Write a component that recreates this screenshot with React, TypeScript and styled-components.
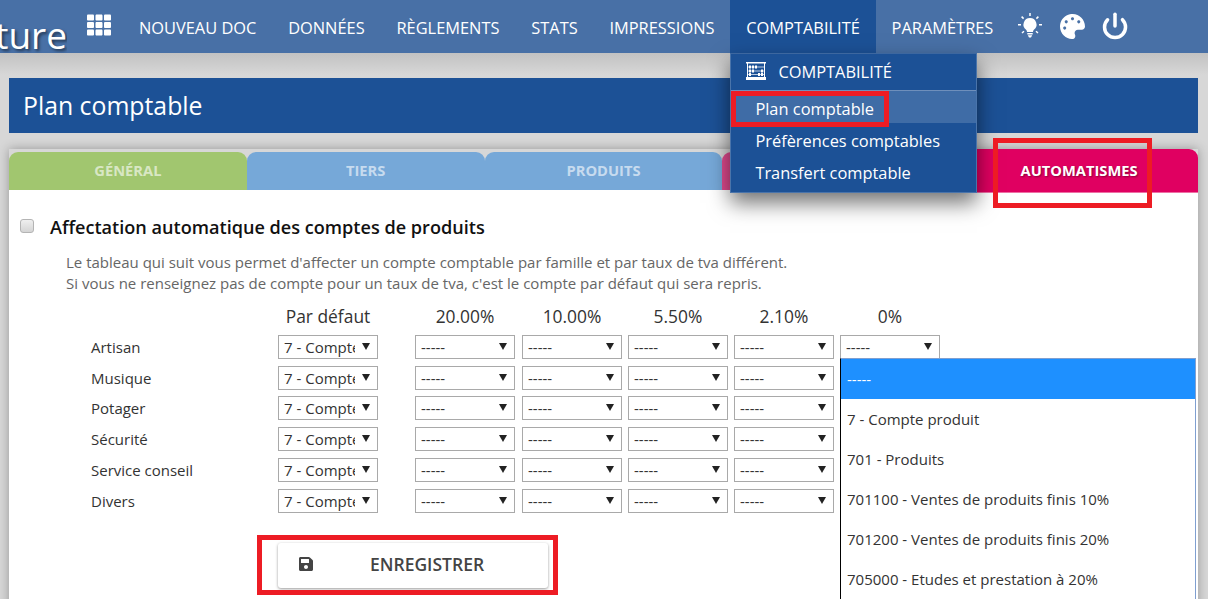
import * as React from "react";
import styled, { createGlobalStyle } from "styled-components";
import { FaPalette, FaSave, FaTh } from "react-icons/fa";
import { Power } from "lucide-react";

const GlobalStyle = createGlobalStyle`
  html, body {
    margin: 0;
    height: 599px;
    overflow: hidden;
    background: #d7d7d7;
    font-family: "Open Sans", "Liberation Sans", sans-serif;
  }
`;

const Page = styled.div`
  position: relative;
  width: 1208px;
  height: 599px;
  overflow: hidden;
`;

const NavBar = styled.nav`
  display: flex;
  align-items: stretch;
  height: 53px;
  background: #4870a6;
  color: #fff;
  position: relative;
  z-index: 3;
`;

const Logo = styled.div`
  width: 67px;
  height: 53px;
  overflow: hidden;
  direction: rtl;
  font-size: 37px;
  line-height: 70px;
  white-space: nowrap;
  text-shadow: 2px 2px 3px rgba(0, 0, 0, 0.5);
`;

const GridButton = styled.div`
  width: 24px;
  margin: 0 12px 0 20px;
  padding-top: 13px;
  font-size: 24px;
  line-height: 0;
`;

const NavItem = styled.div<{ $active?: boolean }>`
  position: relative;
  display: flex;
  align-items: center;
  padding: 1px 15.9px 0;
  font-size: 16.4px;
  background: ${(p) => (p.$active ? "#1c5196" : "transparent")};
`;

const NavIcons = styled.div`
  display: flex;
  align-items: center;
  gap: 17px;
  margin-left: 8px;
  padding-bottom: 1px;
`;

const PowerIcon = styled(Power)`
  margin: -1px;
`;

const Menu = styled.div`
  position: absolute;
  top: 53px;
  left: 0;
  width: 245px;
  padding-bottom: 5px;
  background: #1c5196;
  border: 1px solid #4a74aa;
  border-top-color: #3d679f;
  box-shadow: 0 10px 20px rgba(0, 0, 0, 0.55);
`;

const MenuHeader = styled.div`
  display: flex;
  align-items: center;
  gap: 12px;
  height: 34px;
  padding: 0 0 2px 15px;
  border-bottom: 1px solid #6f8fbb;
`;

const MenuItem = styled.div<{ $active?: boolean }>`
  height: 32px;
  line-height: 36px;
  padding-left: 24px;
  background: ${(p) => (p.$active ? "#3f6ca6" : "transparent")};
`;

const Main = styled.main`
  padding: 25px 10px 0 9px;
  height: 546px;
  box-sizing: border-box;
  background: linear-gradient(#c2c2c2, #d7d7d7 22px);
`;

const TitleBar = styled.h1`
  margin: 0;
  height: 55px;
  line-height: 55px;
  padding-left: 14px;
  background: #1c5196;
  color: #fff;
  font-size: 24.8px;
  font-weight: 400;
`;

const Card = styled.section`
  margin-top: 16px;
  box-shadow: 0 0 10px rgba(0, 0, 0, 0.3);
`;

const TabRow = styled.div`
  display: flex;
  align-items: flex-end;
  height: 41px;
  background: #d7d7d7;
`;

const Tab = styled.div<{ $color: string; $active?: boolean }>`
  position: relative;
  z-index: ${(p) => (p.$active ? 1 : 0)};
  flex: 1;
  height: ${(p) => (p.$active ? "44px" : "38px")};
  margin-bottom: ${(p) => (p.$active ? "-3px" : "0")};
  box-sizing: border-box;
  padding-top: ${(p) => (p.$active ? "12px" : "9px")};
  border-radius: 9px 9px 0 0;
  border-bottom: ${(p) => (p.$active ? "1px solid #ee6fa4" : "none")};
  background: ${(p) => p.$color};
  color: ${(p) => (p.$active ? "#fff" : "rgba(255, 255, 255, 0.6)")};
  font-size: 14.7px;
  font-weight: 700;
  line-height: 19px;
  text-align: center;
  text-shadow: ${(p) => (p.$active ? "1px 1px 2px rgba(0, 0, 0, 0.4)" : "none")};
`;

const Panel = styled.div`
  height: 420px;
  background: #fff;
  padding-top: 25px;
`;

const Heading = styled.div`
  display: flex;
  align-items: center;
  height: 24px;
  padding-left: 11px;
  gap: 16px;
  color: #111;
  font-size: 18.1px;
  font-weight: 600;
`;

const Check = styled.span`
  width: 14px;
  height: 14px;
  margin-top: -3px;
  box-sizing: border-box;
  border: 1px solid #b4b4b4;
  border-radius: 3px;
  background: linear-gradient(#efefef, #d4d4d4);
`;

const Description = styled.p`
  margin: 13px 0 0 57px;
  color: #666;
  font-size: 15px;
  line-height: 20.5px;
`;

const AccountGrid = styled.div`
  display: grid;
  grid-template-columns: 187px 137px 107px 106px 106px 106px 100px;
  grid-auto-rows: 24px;
  row-gap: 6.8px;
  margin: 11px 0 0 82px;
  font-size: 15px;
  color: #333;
  align-items: center;
`;

const ColumnHead = styled.div`
  width: 100px;
  color: #333;
  font-size: 17.4px;
  text-align: center;
`;

const SelectBox = styled.div`
  position: relative;
  display: flex;
  align-items: center;
  width: 100px;
  height: 24px;
  box-sizing: border-box;
  padding: 0 0 0 5px;
  border: 1px solid #a9a9a9;
  background: #fff;
  color: #333;
`;

const SelectValue = styled.span`
  width: 71px;
  overflow: hidden;
  white-space: nowrap;
`;

const Arrow = styled.span`
  position: absolute;
  right: 7px;
  top: 7px;
  border-left: 4px solid transparent;
  border-right: 4px solid transparent;
  border-top: 7px solid #222;
`;

const OpenList = styled.ul`
  position: absolute;
  top: 22px;
  left: -1px;
  z-index: 2;
  width: 356px;
  margin: 0;
  padding: 0;
  box-sizing: border-box;
  list-style: none;
  background: #fff;
  border: 1px solid #7f9fd0;
  border-left-color: #000;
  font-size: 15px;
`;

const OpenOption = styled.li<{ $selected?: boolean }>`
  height: 40px;
  line-height: 40px;
  padding-left: 6px;
  white-space: nowrap;
  background: ${(p) => (p.$selected ? "#1e90ff" : "#fff")};
  color: ${(p) => (p.$selected ? "#fff" : "#333")};
`;

const SaveButton = styled.button`
  display: flex;
  align-items: center;
  width: 270px;
  height: 45px;
  margin: 30px 0 0 269px;
  padding: 0 0 2px 20px;
  border: none;
  border-radius: 3px;
  background: #fff;
  color: #444;
  font-family: inherit;
  font-size: 17.5px;
  font-weight: 600;
  box-shadow: 0 1px 3px rgba(0, 0, 0, 0.4);
`;

const SaveLabel = styled.span`
  margin-left: 56px;
`;

// red marks added over the screenshot
const Mark = styled.div<{ $x: number; $y: number; $w: number; $h: number }>`
  position: absolute;
  z-index: 5;
  left: ${(p) => p.$x}px;
  top: ${(p) => p.$y}px;
  width: ${(p) => p.$w}px;
  height: ${(p) => p.$h}px;
  box-sizing: border-box;
  border: 5px solid #ed1c24;
  pointer-events: none;
`;

const BulbIcon = () => (
  <svg width="26" height="26" viewBox="0 0 26 26" fill="#fff">
    <path d="M13 5a6.5 6.5 0 0 0-3.9 11.7c.6.5.9 1.3.9 2.3h6c0-1 .3-1.8.9-2.3A6.5 6.5 0 0 0 13 5z" />
    <path d="M10.3 20h5.4v1.4h-5.4zM10.8 22.2h4.4L14 24.4h-2z" />
    <path
      d="M13 0v3M4.6 3.6l2 2M21.4 3.6l-2 2M1 11.8h3M22 11.8h3M5 20l2-1.8M21 20l-2-1.8"
      stroke="#fff"
      strokeWidth="1.5"
      fill="none"
    />
  </svg>
);

const AbacusIcon = () => (
  <svg width="20" height="20" viewBox="0 0 20 20" fill="#fff">
    <path d="M0 1h20v1.5H0zM0 16h20v3H0zM1 2h1v14H1zM18 2h1v14h-1z" />
    <path d="M2 5.5h16v1H2zM2 9.5h16v1H2zM2 13h16v1H2z" opacity="0.7" />
    <path d="M3 4.5h2v3H3zM6 4.5h2v3H6zM9 4.5h2v3H9zM15 8.5h2v3h-2zM3 8.5h2v3H3zM6 8.5h2v3H6zM3 12h2v3H3zM12 12h2v3h-2zM15 12h2v3h-2z" />
  </svg>
);

const NAV_LINKS = ["NOUVEAU DOC", "DONNÉES", "RÈGLEMENTS", "STATS", "IMPRESSIONS"];
const RATES = ["20.00%", "10.00%", "5.50%", "2.10%", "0%"];
const FAMILIES = ["Artisan", "Musique", "Potager", "Sécurité", "Service conseil", "Divers"];
const ACCOUNTS = [
  "-----",
  "7 - Compte produit",
  "701 - Produits",
  "701100 - Ventes de produits finis 10%",
  "701200 - Ventes de produits finis 20%",
  "705000 - Etudes et prestation à 20%",
];

const Select = ({ value, open }: { value: string; open?: boolean }) => (
  <SelectBox>
    <SelectValue>{value}</SelectValue>
    <Arrow />
    {open ? (
      <OpenList>
        {ACCOUNTS.map((a, i) => (
          <OpenOption key={a} $selected={i === 0}>
            {a}
          </OpenOption>
        ))}
      </OpenList>
    ) : null}
  </SelectBox>
);

export default function App() {
  return (
    <Page>
      <GlobalStyle />
      <NavBar>
        <Logo>ture</Logo>
        <GridButton>
          <FaTh />
        </GridButton>
        {NAV_LINKS.map((l) => (
          <NavItem key={l}>{l}</NavItem>
        ))}
        <NavItem $active>
          COMPTABILITÉ
          <Menu>
            <MenuHeader>
              <AbacusIcon />
              COMPTABILITÉ
            </MenuHeader>
            <MenuItem $active>Plan comptable</MenuItem>
            <MenuItem>Préfèrences comptables</MenuItem>
            <MenuItem>Transfert comptable</MenuItem>
          </Menu>
        </NavItem>
        <NavItem>PARAMÈTRES</NavItem>
        <NavIcons>
          <BulbIcon />
          <FaPalette size={25} />
          <PowerIcon size={28} strokeWidth={3} />
        </NavIcons>
      </NavBar>
      <Main>
        <TitleBar>Plan comptable</TitleBar>
        <Card>
          <TabRow>
            <Tab $color="#a1c66f">GÉNÉRAL</Tab>
            <Tab $color="#76a8d8">TIERS</Tab>
            <Tab $color="#76a8d8">PRODUITS</Tab>
            <Tab $color="#e04a8e" />
            <Tab $color="#e00061" $active>
              AUTOMATISMES
            </Tab>
          </TabRow>
          <Panel>
            <Heading>
              <Check />
              Affectation automatique des comptes de produits
            </Heading>
            <Description>
              Le tableau qui suit vous permet d'affecter un compte comptable par famille et par taux de tva différent.
              <br />
              Si vous ne renseignez pas de compte pour un taux de tva, c'est le compte par défaut qui sera repris.
            </Description>
            <AccountGrid>
              <span />
              <ColumnHead>Par défaut</ColumnHead>
              {RATES.map((r) => (
                <ColumnHead key={r}>{r}</ColumnHead>
              ))}
              {FAMILIES.map((f, row) => (
                <React.Fragment key={f}>
                  <span>{f}</span>
                  <Select value="7 - Compte produit" />
                  {RATES.map((r, col) => (
                    <Select key={r} value="-----" open={row === 0 && col === 4} />
                  ))}
                </React.Fragment>
              ))}
            </AccountGrid>
            <SaveButton>
              <FaSave size={16} />
              <SaveLabel>ENREGISTRER</SaveLabel>
            </SaveButton>
          </Panel>
        </Card>
      </Main>
      <Mark $x={731} $y={91} $w={158} $h={36} />
      <Mark $x={993} $y={138} $w={159} $h={70} />
      <Mark $x={257} $y={535} $w={301} $h={60} />
    </Page>
  );
}
